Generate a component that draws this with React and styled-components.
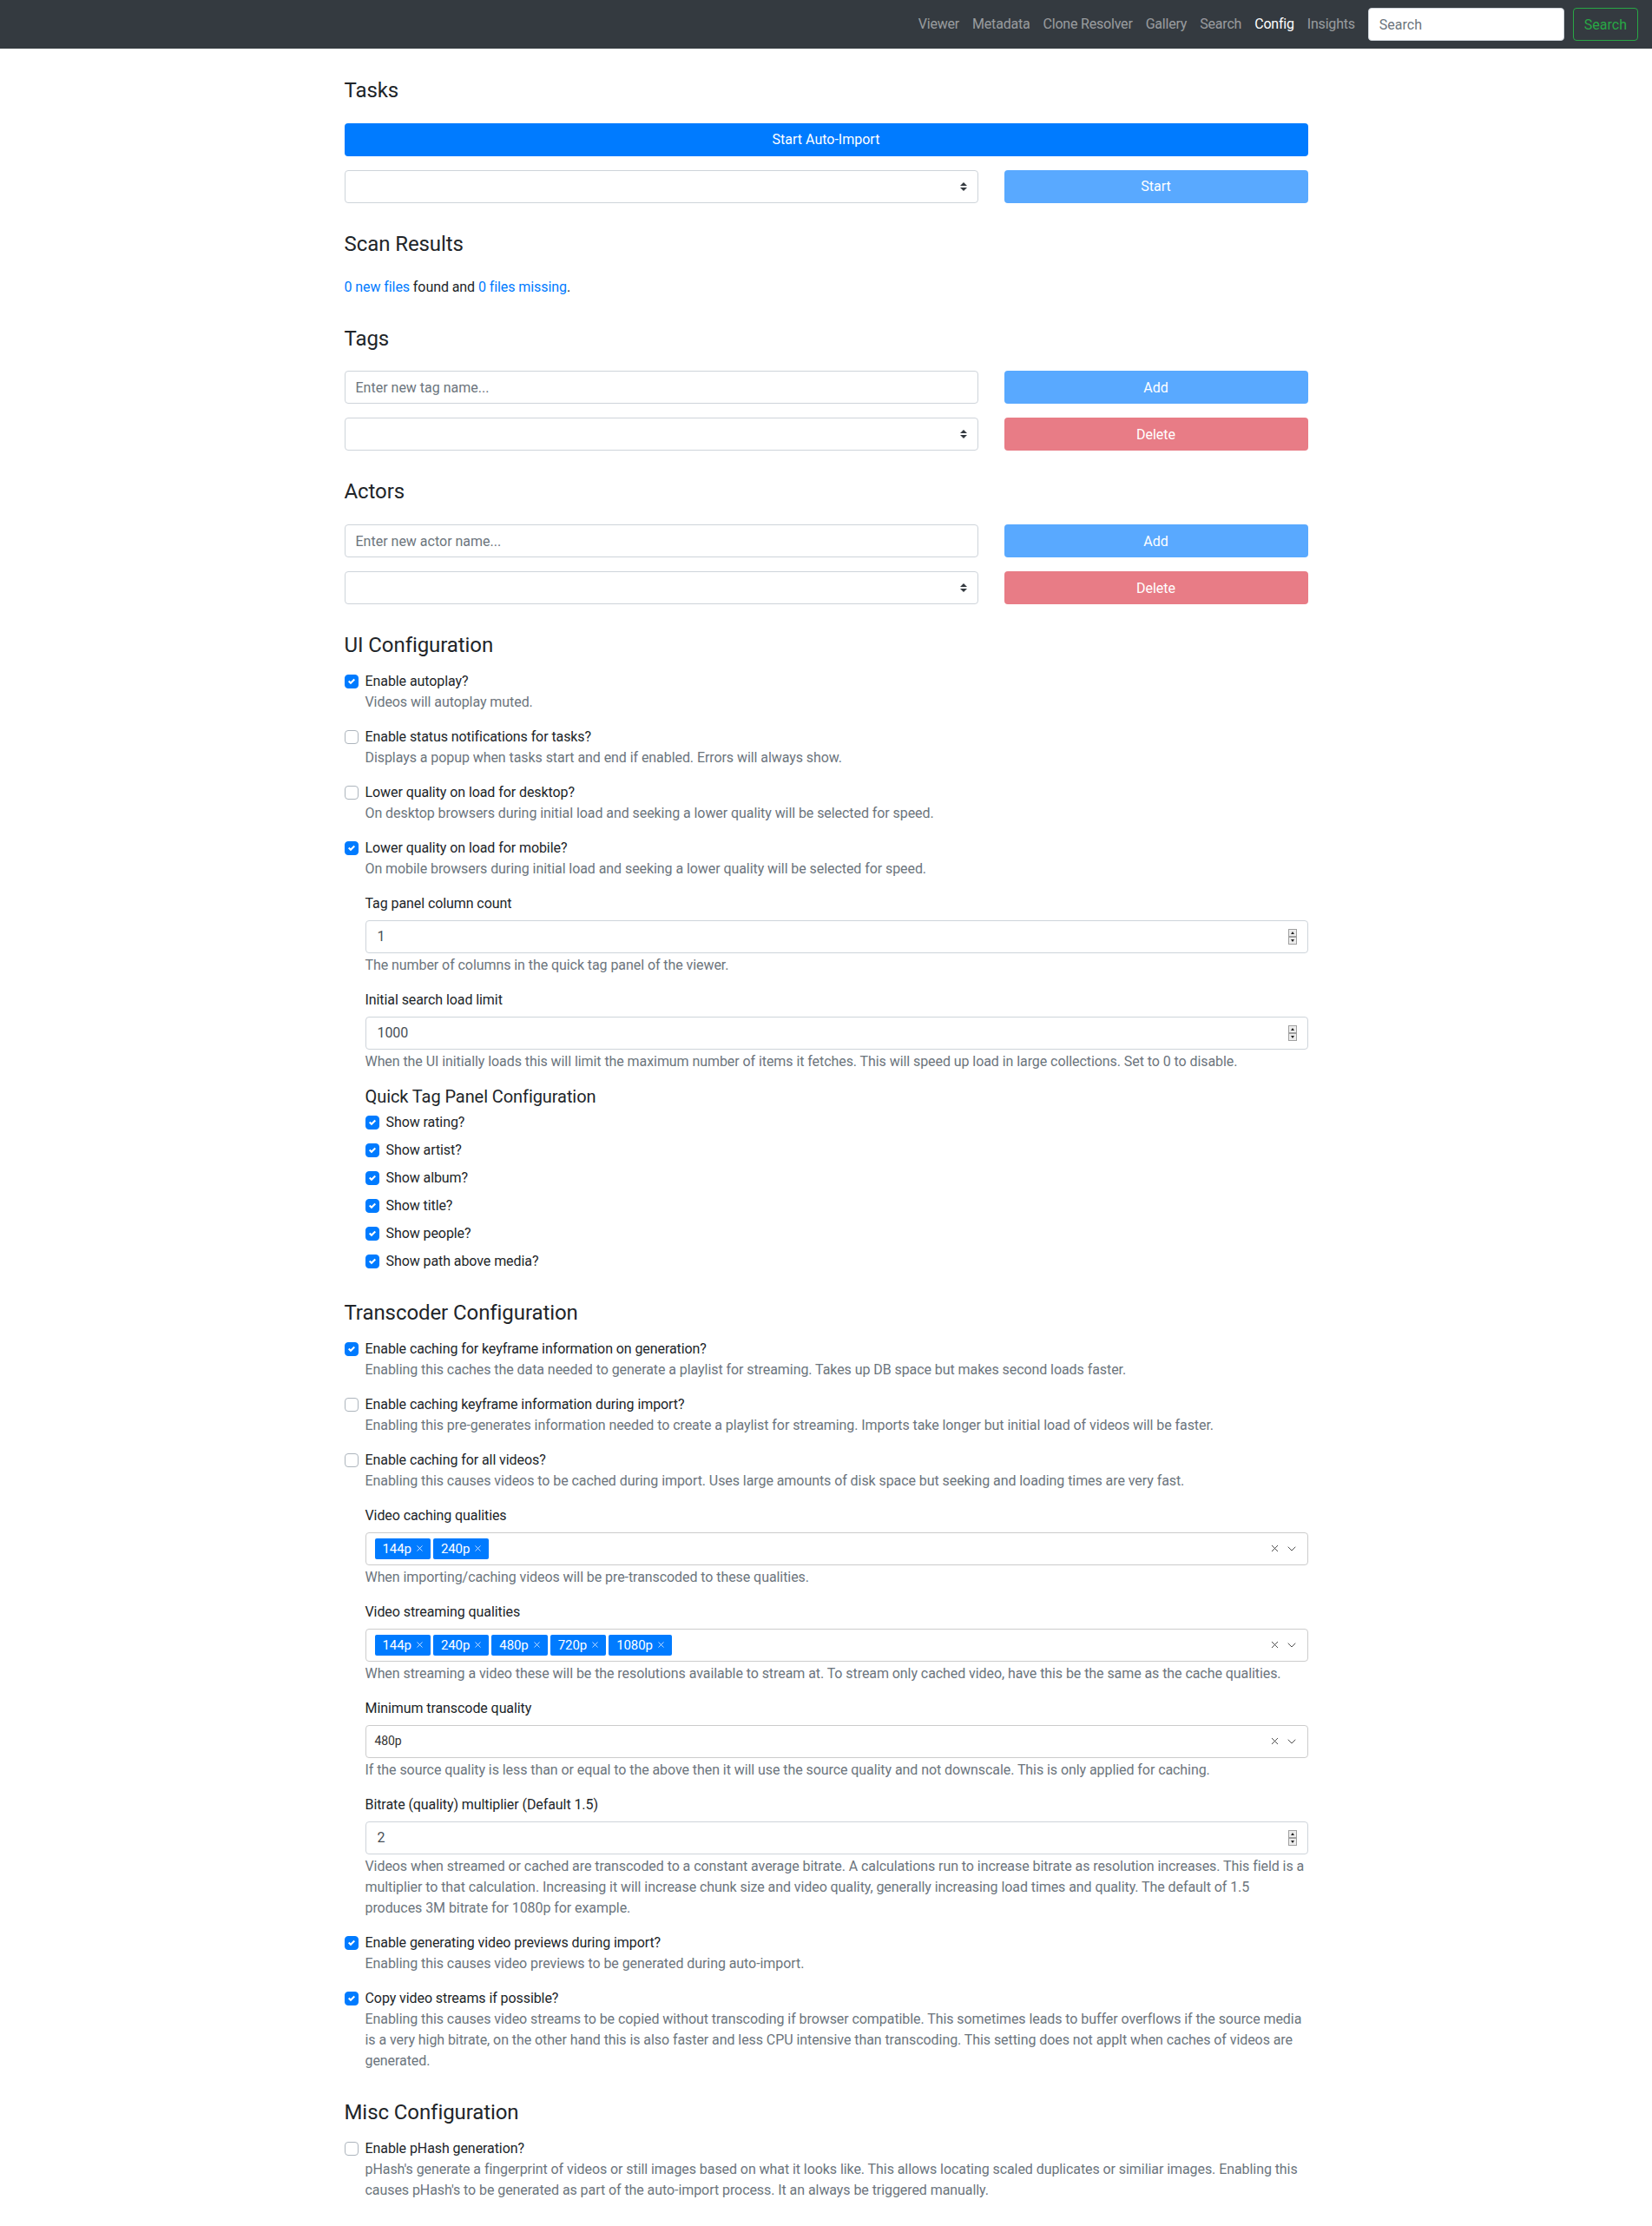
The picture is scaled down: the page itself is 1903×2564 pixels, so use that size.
import React from "react";
import styled, { createGlobalStyle } from "styled-components";
import { X, ChevronDown } from "lucide-react";

const FONT = `Roboto, "Liberation Sans", Arial, sans-serif`;

const GlobalStyle = createGlobalStyle`
  * { box-sizing: border-box; }
  body {
    margin: 0;
    background: #fff;
    color: #212529;
    font-family: ${FONT};
    font-size: 16px;
    line-height: 1.5;
    letter-spacing: -0.08px;
  }
`;

const NAV_LINKS = ["Viewer", "Metadata", "Clone Resolver", "Gallery", "Search", "Config", "Insights"];

const UI_ITEMS = [
  { label: "Enable autoplay?", help: "Videos will autoplay muted.", checked: true },
  {
    label: "Enable status notifications for tasks?",
    help: "Displays a popup when tasks start and end if enabled. Errors will always show.",
  },
  {
    label: "Lower quality on load for desktop?",
    help: "On desktop browsers during initial load and seeking a lower quality will be selected for speed.",
  },
  {
    label: "Lower quality on load for mobile?",
    help: "On mobile browsers during initial load and seeking a lower quality will be selected for speed.",
    checked: true,
  },
];

const QUICK_TAG = ["Show rating?", "Show artist?", "Show album?", "Show title?", "Show people?", "Show path above media?"];

const TRANSCODE_ITEMS = [
  {
    label: "Enable caching for keyframe information on generation?",
    help: "Enabling this caches the data needed to generate a playlist for streaming. Takes up DB space but makes second loads faster.",
    checked: true,
  },
  {
    label: "Enable caching keyframe information during import?",
    help: "Enabling this pre-generates information needed to create a playlist for streaming. Imports take longer but initial load of videos will be faster.",
  },
  {
    label: "Enable caching for all videos?",
    help: "Enabling this causes videos to be cached during import. Uses large amounts of disk space but seeking and loading times are very fast.",
  },
];

const TRANSCODE_TAIL = [
  {
    label: "Enable generating video previews during import?",
    help: "Enabling this causes video previews to be generated during auto-import.",
    checked: true,
  },
  {
    label: "Copy video streams if possible?",
    help: "Enabling this causes video streams to be copied without transcoding if browser compatible. This sometimes leads to buffer overflows if the source media is a very high bitrate, on the other hand this is also faster and less CPU intensive than transcoding. This setting does not applt when caches of videos are generated.",
    checked: true,
  },
];

const CheckIcon = () => (
  <svg width="8" height="8" viewBox="0 0 8 8">
    <path fill="#fff" d="M6.564.75l-3.59 3.612-1.538-1.55L0 4.26l2.974 2.99L8 2.193z" />
  </svg>
);

const SelectArrows = () => (
  <svg width="8" height="10" viewBox="0 0 4 5">
    <path fill="#343a40" d="M2 0L0 2h4zm0 5L0 3h4z" />
  </svg>
);

const Spinner = () => (
  <svg width="10" height="18" viewBox="0 0 10 18">
    <rect x="0.5" y="0.5" width="9" height="8" fill="#ececec" stroke="#a0a0a0" />
    <rect x="0.5" y="9.5" width="9" height="8" fill="#ececec" stroke="#a0a0a0" />
    <path d="M3 6h4L5 3z" fill="#222" />
    <path d="M3 12h4l-2 3z" fill="#222" />
  </svg>
);

const CheckItem = ({ label, help, checked, compact }) => (
  <CheckRow $compact={compact}>
    <Box $checked={checked}>{checked && <CheckIcon />}</Box>
    <div>
      <CheckLabel>{label}</CheckLabel>
      {help && <Help>{help}</Help>}
    </div>
  </CheckRow>
);

const NumberGroup = ({ label, value, help }) => (
  <FormGroup>
    <FieldLabel>{label}</FieldLabel>
    <Field>
      <span>{value}</span>
      <Spinner />
    </Field>
    <Help $tight>{help}</Help>
  </FormGroup>
);

const MultiGroup = ({ label, values, single, help }) => (
  <FormGroup>
    <FieldLabel>{label}</FieldLabel>
    <MultiBox>
      <Chips>
        {single ? (
          <SingleValue>{single}</SingleValue>
        ) : (
          values.map((v) => (
            <Chip key={v}>
              {v} <X size={11} strokeWidth={1.6} />
            </Chip>
          ))
        )}
      </Chips>
      <Indicators>
        <X size={13} strokeWidth={1.6} />
        <ChevronDown size={16} strokeWidth={1.3} />
      </Indicators>
    </MultiBox>
    <Help $tight>{help}</Help>
  </FormGroup>
);

const App = () => {
  return (
    <>
      <GlobalStyle />
      <Navbar>
        {NAV_LINKS.map((l) => (
          <NavLink key={l} $active={l === "Config"}>
            {l}
          </NavLink>
        ))}
        <SearchInput placeholder="Search" />
        <SearchButton>Search</SearchButton>
      </Navbar>

      <Main>
        <Section>
          <SectionTitle>Tasks</SectionTitle>
          <Button $variant="primary">Start Auto-Import</Button>
          <FormRow>
            <SelectBox>
              <SelectArrows />
            </SelectBox>
            <Button $variant="primaryDisabled">Start</Button>
          </FormRow>
        </Section>

        <Section>
          <SectionTitle>Scan Results</SectionTitle>
          <Paragraph>
            <Link>0 new files</Link> found and <Link>0 files missing</Link>.
          </Paragraph>
        </Section>

        <Section>
          <SectionTitle>Tags</SectionTitle>
          <FormRow>
            <TextInput placeholder="Enter new tag name..." />
            <Button $variant="primaryDisabled">Add</Button>
          </FormRow>
          <FormRow>
            <SelectBox>
              <SelectArrows />
            </SelectBox>
            <Button $variant="dangerDisabled">Delete</Button>
          </FormRow>
        </Section>

        <Section>
          <SectionTitle>Actors</SectionTitle>
          <FormRow>
            <TextInput placeholder="Enter new actor name..." />
            <Button $variant="primaryDisabled">Add</Button>
          </FormRow>
          <FormRow>
            <SelectBox>
              <SelectArrows />
            </SelectBox>
            <Button $variant="dangerDisabled">Delete</Button>
          </FormRow>
        </Section>

        <Section>
          <SectionTitle $small>UI Configuration</SectionTitle>
          {UI_ITEMS.map((it) => (
            <CheckItem key={it.label} {...it} />
          ))}
          <NumberGroup
            label="Tag panel column count"
            value="1"
            help="The number of columns in the quick tag panel of the viewer."
          />
          <NumberGroup
            label="Initial search load limit"
            value="1000"
            help="When the UI initially loads this will limit the maximum number of items it fetches. This will speed up load in large collections. Set to 0 to disable."
          />
          <Indented>
            <SubTitle>Quick Tag Panel Configuration</SubTitle>
            {QUICK_TAG.map((l) => (
              <CheckItem key={l} label={l} checked compact />
            ))}
          </Indented>
        </Section>

        <Section>
          <SectionTitle $small>Transcoder Configuration</SectionTitle>
          {TRANSCODE_ITEMS.map((it) => (
            <CheckItem key={it.label} {...it} />
          ))}
          <MultiGroup
            label="Video caching qualities"
            values={["144p", "240p"]}
            help="When importing/caching videos will be pre-transcoded to these qualities."
          />
          <MultiGroup
            label="Video streaming qualities"
            values={["144p", "240p", "480p", "720p", "1080p"]}
            help="When streaming a video these will be the resolutions available to stream at. To stream only cached video, have this be the same as the cache qualities."
          />
          <MultiGroup
            label="Minimum transcode quality"
            single="480p"
            help="If the source quality is less than or equal to the above then it will use the source quality and not downscale. This is only applied for caching."
          />
          <NumberGroup
            label="Bitrate (quality) multiplier (Default 1.5)"
            value="2"
            help="Videos when streamed or cached are transcoded to a constant average bitrate. A calculations run to increase bitrate as resolution increases. This field is a multiplier to that calculation. Increasing it will increase chunk size and video quality, generally increasing load times and quality. The default of 1.5 produces 3M bitrate for 1080p for example."
          />
          {TRANSCODE_TAIL.map((it) => (
            <CheckItem key={it.label} {...it} />
          ))}
        </Section>

        <Section>
          <SectionTitle $small>Misc Configuration</SectionTitle>
          <CheckItem
            label="Enable pHash generation?"
            help="pHash's generate a fingerprint of videos or still images based on what it looks like. This allows locating scaled duplicates or similiar images. Enabling this causes pHash's to be generated as part of the auto-import process. It an always be triggered manually."
          />
        </Section>
      </Main>
    </>
  );
};

export default App;

const Navbar = styled.nav`
  height: 56px;
  background: #343a40;
  display: flex;
  align-items: center;
  justify-content: flex-end;
  padding: 0 16px;
`;

const NavLink = styled.a`
  padding: 8px 7px 8px 8px;
  font-size: 16px;
  line-height: 24px;
  letter-spacing: -0.2px;
  color: ${(p) => (p.$active ? "#fff" : "rgba(255, 255, 255, 0.5)")};
  cursor: pointer;
`;

const SearchInput = styled.input`
  width: 226px;
  height: 38px;
  margin-left: 8px;
  padding: 6px 12px;
  border: 1px solid #ced4da;
  border-radius: 4px;
  font-family: ${FONT};
  font-size: 16px;
  color: #495057;
  &::placeholder { color: #6c757d; }
`;

const SearchButton = styled.button`
  height: 38px;
  margin-left: 10px;
  padding: 6px 12px;
  background: transparent;
  border: 1px solid #28a745;
  border-radius: 4px;
  color: #28a745;
  font-family: ${FONT};
  font-size: 16px;
`;

const Main = styled.main`
  width: 1110px;
  margin: 0 auto;
  padding: 34px 0 32px;
`;

const Section = styled.section`
  display: flex;
  flex-direction: column;
  margin-bottom: 33px;
  &:last-child { margin-bottom: 0; }
`;

const SectionTitle = styled.h4`
  margin: 0 0 ${(p) => (p.$small ? "15px" : "23px")};
  font-size: 24px;
  font-weight: 400;
  line-height: 1.2;
`;

const SubTitle = styled.h5`
  margin: 0 0 6px;
  font-size: 20px;
  font-weight: 400;
  line-height: 1.2;
`;

const VARIANTS = {
  primary: "#007bff",
  primaryDisabled: "#59a9ff",
  dangerDisabled: "#e87c86",
};

const Button = styled.button`
  height: 38px;
  width: 100%;
  padding: 6px 12px;
  border: none;
  border-radius: 4px;
  background: ${(p) => VARIANTS[p.$variant]};
  color: #fff;
  font-family: ${FONT};
  font-size: 16px;
  margin-bottom: 16px;
  &:last-child { margin-bottom: 0; }
`;

const FormRow = styled.div`
  display: grid;
  grid-template-columns: calc(66.6667% - 10px) 1fr;
  column-gap: 30px;
  margin-bottom: 16px;
  &:last-child { margin-bottom: 0; }
  & > ${Button} { margin-bottom: 0; }
`;

const SelectBox = styled.div`
  height: 38px;
  border: 1px solid #ced4da;
  border-radius: 4px;
  display: flex;
  align-items: center;
  justify-content: flex-end;
  padding: 0 12px;
`;

const TextInput = styled.input`
  height: 38px;
  width: 100%;
  padding: 6px 12px;
  border: 1px solid #ced4da;
  border-radius: 4px;
  font-family: ${FONT};
  font-size: 16px;
  &::placeholder { color: #6c757d; }
`;

const Paragraph = styled.p`
  margin: 0;
`;

const Link = styled.a`
  color: #007bff;
`;

const CheckRow = styled.div`
  display: flex;
  gap: 8px;
  margin-bottom: ${(p) => (p.$compact ? "8px" : "16px")};
  &:last-child { margin-bottom: 0; }
`;

const Box = styled.span`
  flex: none;
  width: 16px;
  height: 16px;
  margin-top: 4px;
  border-radius: 4px;
  display: flex;
  align-items: center;
  justify-content: center;
  background: ${(p) => (p.$checked ? "#007bff" : "#fff")};
  border: 1px solid ${(p) => (p.$checked ? "#007bff" : "#adb5bd")};
`;

const CheckLabel = styled.div`
  line-height: 24px;
`;

const Help = styled.div`
  color: #6c757d;
  line-height: 24px;
  letter-spacing: -0.07px;
  margin-top: ${(p) => (p.$tight ? "2px" : "0")};
`;

const FormGroup = styled.div`
  margin: 0 0 16px 24px;
`;

const FieldLabel = styled.div`
  line-height: 24px;
  margin-bottom: 7px;
`;

const Field = styled.div`
  height: 38px;
  border: 1px solid #ced4da;
  border-radius: 4px;
  padding: 0 12px 0 13px;
  display: flex;
  align-items: center;
  justify-content: space-between;
  color: #495057;
`;

const MultiBox = styled.div`
  height: 38px;
  border: 1px solid #ccc;
  border-radius: 4px;
  padding: 0 10px;
  display: flex;
  align-items: center;
  justify-content: space-between;
`;

const Chips = styled.div`
  display: flex;
  gap: 3px;
`;

const Chip = styled.span`
  height: 24px;
  padding: 0 7px 0 9px;
  display: inline-flex;
  align-items: center;
  gap: 4px;
  background: #007bff;
  border-radius: 2px;
  color: #fff;
  font-size: 15px;
`;

const SingleValue = styled.span`
  font-size: 14px;
  color: #333;
`;

const Indicators = styled.div`
  display: flex;
  align-items: center;
  gap: 5px;
  color: #333;
`;

const Indented = styled.div`
  margin-left: 24px;
`;
